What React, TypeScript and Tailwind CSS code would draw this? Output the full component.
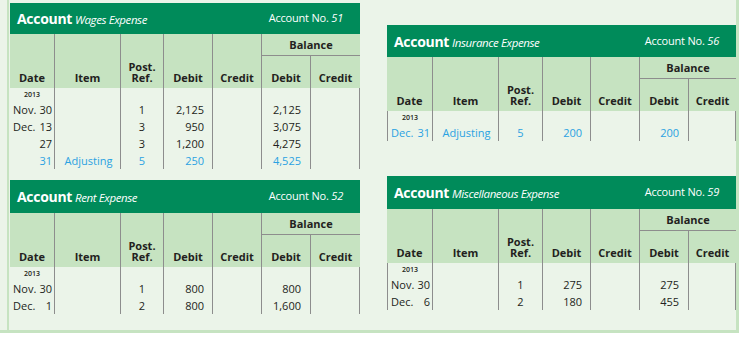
type Row = {
  m?: string;
  d?: string;
  item?: string;
  ref?: string;
  debit?: string;
  bal?: string;
  blue?: boolean;
};

type LedgerProps = {
  name: string;
  no: string;
  cols: string;
  width: string;
  headerH: string;
  leftEdge?: boolean;
  rows: Row[];
};

const line = 'border-[#8d8d8d]';

function Ledger({ name, no, cols, width, headerH, leftEdge, rows }: LedgerProps) {
  const head = `border-l ${line} row-span-2 flex items-end justify-center pb-[5px]`;
  return (
    <div className={width}>
      <div className={`${headerH} bg-[#008b5a] text-white flex items-center justify-between pl-[7px] pr-[17px]`}>
        <div className="flex items-baseline gap-[3px]">
          <span className="text-[14px] font-bold tracking-[-0.3px]">Account</span>
          <span className="text-[11.5px] italic tracking-[-0.4px]">{name}</span>
        </div>
        <div className="text-[11px] tracking-[-0.2px]">
          Account No. <span className="italic">{no}</span>
        </div>
      </div>

      <div className={`grid ${cols} grid-rows-[22px_32px] bg-[#c6e3c1] text-[11px] leading-[11px] font-bold text-[#231f20]`}>
        <div className="row-span-2 flex items-end justify-center pb-[5px]">Date</div>
        <div className={head}>Item</div>
        <div className={`${head} text-center`}>
          <span>
            Post.
            <br />
            Ref.
          </span>
        </div>
        <div className={head}>Debit</div>
        <div className={head}>Credit</div>
        <div className={`col-span-2 border-l border-b ${line} flex items-center justify-center`}>Balance</div>
        <div className={`border-l ${line} flex items-end justify-center pb-[5px]`}>Debit</div>
        <div className={`border-l ${line} flex items-end justify-center pb-[5px]`}>Credit</div>
      </div>

      <div className="text-[11px] leading-[17px] text-[#231f20]">
        <div className={`grid ${cols} h-[13px]`}>
          <div className={`${leftEdge ? `border-l ${line}` : ''} flex items-center justify-center text-[7px] leading-[7px] font-semibold`}>
            2013
          </div>
          <div className={`border-l ${line}`} />
          <div className={`border-l ${line}`} />
          <div className={`border-l ${line}`} />
          <div className={`border-l ${line}`} />
          <div className={`border-l ${line}`} />
          <div className={`border-l border-r ${line}`} />
        </div>
        {rows.map((r, i) => (
          <div key={i} className={`grid ${cols} h-[17px] ${r.blue ? 'text-[#2aa2e2]' : ''}`}>
            <div className={`${leftEdge ? `border-l ${line}` : ''} flex justify-between pl-[3px] pr-[2px]`}>
              <span>{r.m}</span>
              <span>{r.d}</span>
            </div>
            <div className={`border-l ${line} text-center pl-[2px]`}>{r.item}</div>
            <div className={`border-l ${line} text-center`}>{r.ref}</div>
            <div className={`border-l ${line} text-right pr-[8px]`}>{r.debit}</div>
            <div className={`border-l ${line}`} />
            <div className={`border-l ${line} text-right pr-[9px]`}>{r.bal}</div>
            <div className={`border-l border-r ${line}`} />
          </div>
        ))}
      </div>
    </div>
  );
}

const leftCols = 'grid-cols-[44px_66px_43px_49px_49px_49px_50px]';
const rightCols = 'grid-cols-[45px_66px_44px_48px_49px_49px_48px]';

export default function App() {
  return (
    <div className="w-[742px] h-[337px] bg-white font-['Open_Sans',sans-serif]">
      <div className="w-[739px] h-[333px] bg-[#ebf4e9] border-r-[3px] border-b-[3px] border-[#c6e3c1] pl-[7px]">
        <div className="h-full border-l-2 border-[#c6e3c1] pl-[1px] flex gap-[27px]">
          <div className="flex flex-col">
            <div className="mt-[3px]">
              <Ledger
                name="Wages Expense"
                no="51"
                cols={leftCols}
                width="w-[350px]"
                headerH="h-[31px]"
                rows={[
                  { m: 'Nov.', d: '30', ref: '1', debit: '2,125', bal: '2,125' },
                  { m: 'Dec.', d: '13', ref: '3', debit: '950', bal: '3,075' },
                  { d: '27', ref: '3', debit: '1,200', bal: '4,275' },
                  { d: '31', item: 'Adjusting', ref: '5', debit: '250', bal: '4,525', blue: true },
                ]}
              />
            </div>
            <div className="mt-[11px]">
              <Ledger
                name="Rent Expense"
                no="52"
                cols={leftCols}
                width="w-[350px]"
                headerH="h-[33px]"
                rows={[
                  { m: 'Nov.', d: '30', ref: '1', debit: '800', bal: '800' },
                  { m: 'Dec.', d: '1', ref: '2', debit: '800', bal: '1,600' },
                ]}
              />
            </div>
          </div>

          <div className="flex flex-col">
            <div className="mt-[25px]">
              <Ledger
                name="Insurance Expense"
                no="56"
                cols={rightCols}
                width="w-[349px]"
                headerH="h-[32px]"
                leftEdge
                rows={[{ m: 'Dec.', d: '31', item: 'Adjusting', ref: '5', debit: '200', bal: '200', blue: true }]}
              />
            </div>
            <div className="mt-[35px]">
              <Ledger
                name="Miscellaneous Expense"
                no="59"
                cols={rightCols}
                width="w-[349px]"
                headerH="h-[33px]"
                leftEdge
                rows={[
                  { m: 'Nov.', d: '30', ref: '1', debit: '275', bal: '275' },
                  { m: 'Dec.', d: '6', ref: '2', debit: '180', bal: '455' },
                ]}
              />
            </div>
          </div>
        </div>
      </div>
    </div>
  );
}
